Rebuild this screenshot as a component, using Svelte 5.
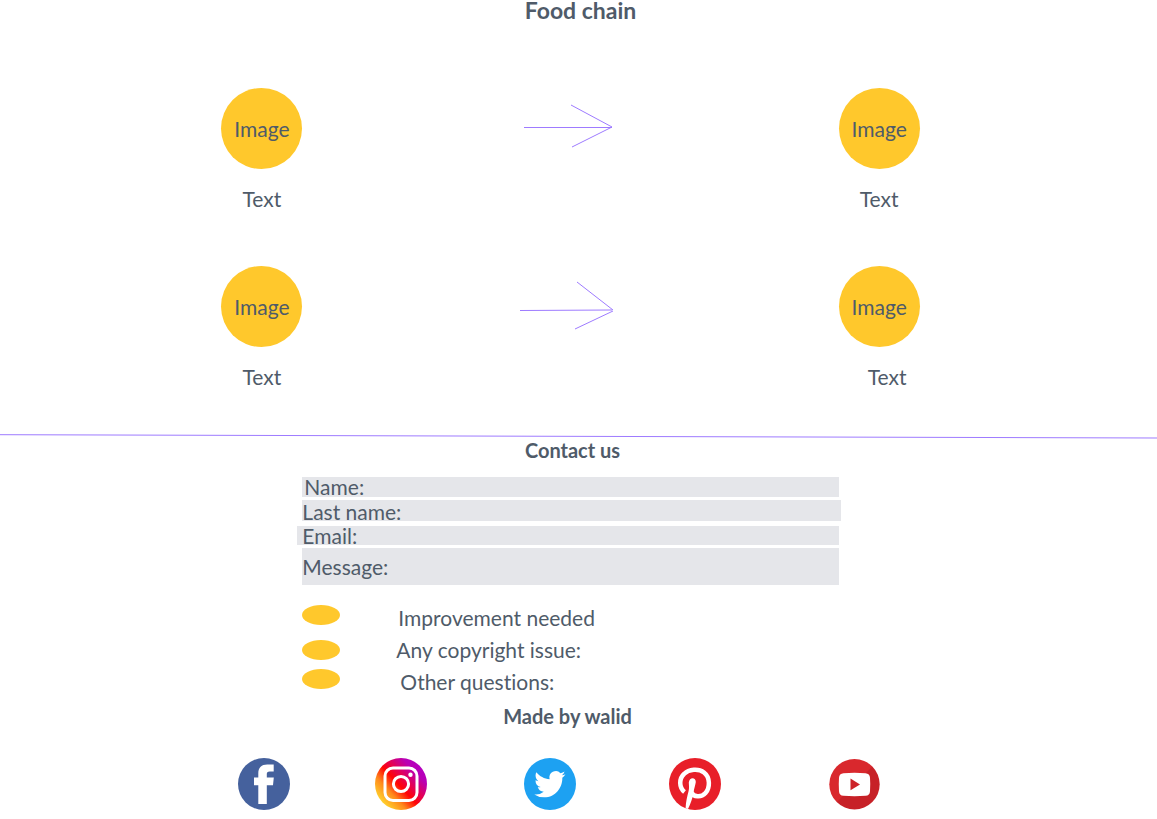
<script>
  const steps = [
    { from: 'Text', to: 'Text', arrow: ['M4 24.5H92', 'M51 2L92 24L52 44'], shifted: false },
    { from: 'Text', to: 'Text', arrow: ['M0 29.5L92 29', 'M57 1L93 29', 'M93 30L55 48'], shifted: true }
  ];
  const fields = [
    { id: 'name', label: 'Name:', type: 'text' },
    { id: 'last', label: 'Last name:', type: 'text' },
    { id: 'email', label: 'Email:', type: 'email' }
  ];
  const topics = [
    { id: 'improvement', label: 'Improvement needed' },
    { id: 'copyright', label: 'Any copyright issue:' },
    { id: 'other', label: 'Other questions:' }
  ];
</script>

<main>
  <section>
    <h1>Food chain</h1>
    {#each steps as step}
      <div class="step">
        <figure>
          <div class="circle">Image</div>
          <figcaption>{step.from}</figcaption>
        </figure>
        <svg class="arrow" viewBox="0 0 96 50" aria-hidden="true">
          {#each step.arrow as d}<path {d} />{/each}
        </svg>
        <figure>
          <div class="circle">Image</div>
          <figcaption class:shifted={step.shifted}>{step.to}</figcaption>
        </figure>
      </div>
    {/each}
  </section>

  <svg class="divider" viewBox="0 0 1157 6" preserveAspectRatio="none" aria-hidden="true">
    <path d="M0 1.7L1157 5" />
  </svg>

  <section>
    <h2 class="contact">Contact us</h2>
    <form>
      {#each fields as f}
        <div class="field {f.id}">
          <label for={f.id}>{f.label}</label>
          <input id={f.id} type={f.type} />
        </div>
      {/each}
      <div class="field message">
        <label for="message">Message:</label>
        <textarea id="message" rows="1"></textarea>
      </div>
      <div class="topics">
        {#each topics as t}
          <div class="topic {t.id}">
            <input type="radio" name="topic" id={t.id} />
            <label for={t.id}>{t.label}</label>
          </div>
        {/each}
      </div>
    </form>
  </section>

  <footer>
    <h2>Made by walid</h2>
    <nav>
      <a href="#facebook" aria-label="Facebook">
        <svg viewBox="0 0 52 52">
          <circle cx="26" cy="26" r="26" fill="#45619d" />
          <path fill="#fff" d="M20.3 46V27.300H16V19.500h4.300v-4.300c0-5.500 3.300-8.600 8.900-8.600h6.500v6.900h-4c-2.200 0-2.900.9-2.900 2.700v3.300h7l-.8 7.800h-6.200V46z" />
        </svg>
      </a>
      <a href="#instagram" aria-label="Instagram">
        <svg viewBox="0 0 52 52">
          <defs>
            <linearGradient id="insta" x1="0.12" y1="0.85" x2="0.88" y2="0.15">
              <stop offset="0" stop-color="#ffd52e" />
              <stop offset="0.25" stop-color="#ff8a1c" />
              <stop offset="0.46" stop-color="#ff0505" />
              <stop offset="0.62" stop-color="#e6004f" />
              <stop offset="0.85" stop-color="#b900b4" />
              <stop offset="1" stop-color="#b400c0" />
            </linearGradient>
          </defs>
          <circle cx="26" cy="26" r="26" fill="url(#insta)" />
          <rect x="10" y="10" width="32" height="32.500" rx="8" fill="none" stroke="#fff" stroke-width="3" />
          <circle cx="26" cy="26" r="7.600" fill="none" stroke="#fff" stroke-width="3" />
          <circle cx="35.500" cy="16.700" r="2.200" fill="#fff" />
        </svg>
      </a>
      <a href="#twitter" aria-label="Twitter">
        <svg viewBox="0 0 52 52">
          <circle cx="26" cy="26" r="26" fill="#1da1f2" />
          <path transform="translate(10.300 10) scale(1.300 1.350)" fill="#fff" d="M23.950 4.570a10 10 0 0 1-2.820.78 4.960 4.960 0 0 0 2.160-2.720c-.95.55-2 .95-3.130 1.180a4.920 4.920 0 0 0-8.380 4.480C7.690 8.090 4.070 6.130 1.640 3.160a4.820 4.820 0 0 0-.67 2.480c0 1.710.87 3.210 2.190 4.100a4.900 4.900 0 0 1-2.230-.62v.06a4.920 4.920 0 0 0 3.950 4.830 5 5 0 0 1-2.210.08 4.940 4.940 0 0 0 4.600 3.420A9.870 9.870 0 0 1 0 19.540a13.990 13.990 0 0 0 7.550 2.210c9.050 0 14-7.500 14-13.980 0-.21 0-.42-.02-.63a9.940 9.940 0 0 0 2.420-2.570z" />
        </svg>
      </a>
      <a href="#pinterest" aria-label="Pinterest">
        <svg viewBox="0 0 52 52">
          <circle cx="26" cy="26" r="26" fill="#e81f29" />
          <path fill="none" stroke="#fff" stroke-width="4.500" d="M15.500 34C9.800 29.500 10 20.500 15 16c5-5 14.500-5.800 20-1.500 6.500 5 6 15.500 1.500 20.500-4.500 5-12 4-14-.5" />
          <path fill="#fff" d="M19.800 24.500c.5-6 7.300-5.500 7-.5-.3 3-1.900 6.600-2.200 10.500-.9 5.500-3.300 11.500-5.600 16.600l-2.400-.8c.2-6 1.500-11.600 3-17.300.8-3.300.3-5.600.2-8.500z" />
        </svg>
      </a>
      <a href="#youtube" aria-label="YouTube">
        <svg viewBox="0 0 52 52">
          <defs>
            <linearGradient id="tube" x1="0" y1="0" x2="1" y2="1">
              <stop offset="0.49" stop-color="#d9282d" />
              <stop offset="0.51" stop-color="#c72127" />
            </linearGradient>
          </defs>
          <circle cx="25.500" cy="26.300" r="25.200" fill="url(#tube)" />
          <path fill="#fff" d="M14.500 15.200q11-.8 22 0 4.300.3 4.500 4.600.5 6.700 0 13.400-.2 4.300-4.500 4.600-11 .8-22 0-4.300-.3-4.500-4.600-.5-6.700 0-13.400.2-4.300 4.500-4.600z" />
          <path fill="#cd2329" d="M21.500 20.500L31 26.400L21.500 32.300z" />
        </svg>
      </a>
    </nav>
  </footer>
</main>

<style>
  :global(body) {
    margin: 0;
    background: #fff;
  }
  main {
    font-family: Lato, 'Open Sans', sans-serif;
    font-size: 21px;
    line-height: 28px;
    font-variant-ligatures: none;
    color: #4f5b69;
  }
  section,
  footer {
    padding-right: 16px;
  }
  h1,
  h2 {
    margin: 0;
    font-weight: 700;
    text-align: center;
  }
  h1 {
    font-size: 23px;
    line-height: 20px;
    padding-left: 20px;
    margin-bottom: 68px;
  }
  h2 {
    font-size: 20px;
    line-height: 22px;
  }
  .contact {
    padding-left: 4px;
  }
  .step {
    display: flex;
    justify-content: space-between;
    padding: 0 19.4%;
    margin-bottom: 53px;
  }
  figure {
    margin: 0;
    width: 81px;
    text-align: center;
  }
  .circle {
    height: 81px;
    border-radius: 50%;
    background: #ffc82c;
    line-height: 81px;
    margin-bottom: 16px;
  }
  .shifted {
    padding-left: 16px;
  }
  .arrow {
    width: 96px;
    height: 50px;
    margin: 15px 6px 0 0;
  }
  .arrow path {
    fill: none;
    stroke: #9e7bff;
    stroke-width: 1;
  }
  .divider {
    display: block;
    width: 100%;
    height: 6px;
    margin-top: -11px;
  }
  .divider path {
    fill: none;
    stroke: #9e7bff;
  }
  form {
    width: 47%;
    margin: 16px auto 0;
  }
  .field {
    display: flex;
    align-items: center;
    height: 20px;
    margin-bottom: 3px;
    background: #e5e6ea;
  }
  .field input,
  .field textarea {
    flex: 1;
    min-width: 0;
    height: 100%;
    box-sizing: border-box;
    padding: 0 4px;
    border: 0;
    background: transparent;
    color: inherit;
    font: inherit;
    resize: none;
    outline: 0;
  }
  .name label {
    padding-left: 2px;
  }
  .last {
    height: 21px;
    margin: 0 -2px 5px 0;
  }
  .last label {
    padding-top: 3px;
  }
  .email {
    height: 19px;
    margin: 0 0 3px -5px;
    padding-left: 5px;
  }
  .message {
    height: 37px;
    margin-bottom: 17px;
  }
  .topic {
    display: flex;
    align-items: center;
    gap: 56px;
    height: 32px;
  }
  .topic input {
    appearance: none;
    width: 38px;
    height: 20px;
    margin: 0;
    border-radius: 50%;
    background: #ffc82c;
  }
  .topic input:checked {
    background: #e5a800;
  }
  .improvement input,
  .other input {
    margin-bottom: 6px;
  }
  .improvement label {
    padding-left: 2px;
  }
  .other label {
    padding-left: 4px;
  }
  footer h2 {
    padding: 7px 6px 31px 0;
  }
  nav {
    display: grid;
    grid-template-columns: 137fr 149fr 145fr 160fr 52px;
    margin: 0 22.8% 9px 20.9%;
  }
  nav a,
  nav svg {
    display: block;
    width: 52px;
    height: 52px;
  }
</style>
